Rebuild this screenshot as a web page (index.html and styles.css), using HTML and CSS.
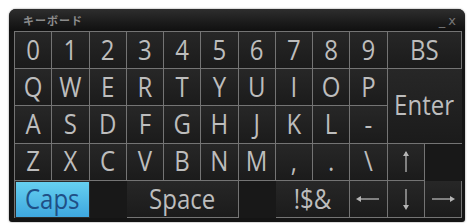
FILE: index.html
```html
<!DOCTYPE html>
<html lang="ja">
  <head>
    <meta charset="UTF-8" />
    <meta name="viewport" content="width=device-width, initial-scale=1.0" />
    <title>キーボード</title>
    <link rel="stylesheet" href="styles.css">
  </head>
  <body>
    <div class="panel">
      <div class="titlebar">
        <span class="title">キーボード</span>
        <span class="winbtns">_<span class="close">x</span></span>
      </div>
      <div class="keys">
        <div class="key"><span>0</span></div>
        <div class="key"><span>1</span></div>
        <div class="key"><span>2</span></div>
        <div class="key"><span>3</span></div>
        <div class="key"><span>4</span></div>
        <div class="key"><span>5</span></div>
        <div class="key"><span>6</span></div>
        <div class="key"><span>7</span></div>
        <div class="key"><span>8</span></div>
        <div class="key"><span>9</span></div>
        <div class="key wide"><span>BS</span></div>

        <div class="key"><span>Q</span></div>
        <div class="key"><span>W</span></div>
        <div class="key"><span>E</span></div>
        <div class="key"><span>R</span></div>
        <div class="key"><span>T</span></div>
        <div class="key"><span>Y</span></div>
        <div class="key"><span>U</span></div>
        <div class="key"><span>I</span></div>
        <div class="key"><span>O</span></div>
        <div class="key"><span>P</span></div>
        <div class="key enter"><span>Enter</span></div>

        <div class="key"><span>A</span></div>
        <div class="key"><span>S</span></div>
        <div class="key"><span>D</span></div>
        <div class="key"><span>F</span></div>
        <div class="key"><span>G</span></div>
        <div class="key"><span>H</span></div>
        <div class="key"><span>J</span></div>
        <div class="key"><span>K</span></div>
        <div class="key"><span>L</span></div>
        <div class="key"><span>-</span></div>

        <div class="key"><span>Z</span></div>
        <div class="key"><span>X</span></div>
        <div class="key"><span>C</span></div>
        <div class="key"><span>V</span></div>
        <div class="key"><span>B</span></div>
        <div class="key"><span>N</span></div>
        <div class="key"><span>M</span></div>
        <div class="key"><span>,</span></div>
        <div class="key"><span>.</span></div>
        <div class="key"><span>\</span></div>
        <div class="key">
          <svg width="8" height="24" viewBox="0 0 8 24"><path d="M4 2 V22" stroke="#b5b5b5" stroke-width="1.3"/><path d="M1 6 L4 1 L7 6 Z" fill="#b5b5b5"/></svg>
        </div>
        <div class="blank"></div>

        <div class="key caps wide"><span>Caps</span></div>
        <div class="blank"></div>
        <div class="key space"><span>Space</span></div>
        <div class="blank"></div>
        <div class="key wide"><span>!$&amp;</span></div>
        <div class="key">
          <svg width="26" height="8" viewBox="0 0 26 8"><path d="M4 4 H24" stroke="#b5b5b5" stroke-width="1.3"/><path d="M6 1 L1 4 L6 7 Z" fill="#b5b5b5"/></svg>
        </div>
        <div class="key">
          <svg width="8" height="24" viewBox="0 0 8 24"><path d="M4 2 V20" stroke="#b5b5b5" stroke-width="1.3"/><path d="M1 18 L4 23 L7 18 Z" fill="#b5b5b5"/></svg>
        </div>
        <div class="key">
          <svg width="26" height="8" viewBox="0 0 26 8"><path d="M2 4 H22" stroke="#b5b5b5" stroke-width="1.3"/><path d="M20 1 L25 4 L20 7 Z" fill="#b5b5b5"/></svg>
        </div>
      </div>
    </div>
  </body>
</html>
```

FILE: styles.css
```css
body {
  margin: 0;
  background: #fff;
  font-family: "Open Sans", "Noto Sans", sans-serif;
}
.panel {
  margin: 9px 6px 1px 9px;
  height: 213px;
  box-sizing: border-box;
  padding: 0 3px 4px 5px;
  background: #141414;
  border-radius: 7px 7px 3px 3px;
  box-shadow: 0 0 2px rgba(0, 0, 0, 0.5);
  display: flex;
  flex-direction: column;
}
.titlebar {
  height: 22px;
  flex: none;
  display: flex;
  align-items: center;
  justify-content: space-between;
  margin: 0 -3px 0 -5px;
  padding: 0 9px 0 14px;
  background: linear-gradient(#2e2e2e, #1b1b1b 60%, #101010);
  border-radius: 7px 7px 0 0;
}
.title {
  font-family: "Noto Sans CJK JP", sans-serif;
  font-size: 11px;
  font-weight: bold;
  color: #8c8c8c;
  letter-spacing: 1px;
}
.winbtns {
  font-family: "DejaVu Sans", sans-serif;
  font-size: 13px;
  color: #777;
  line-height: 1;
}
.close {
  margin-left: 3px;
}
.keys {
  flex: 1;
  display: grid;
  grid-template-columns: repeat(12, 1fr);
  grid-template-rows: repeat(5, 1fr);
  border-top: 1px solid #747474;
  border-left: 1px solid #747474;
}
.key {
  display: flex;
  align-items: center;
  justify-content: center;
  border-right: 1px solid #747474;
  border-bottom: 1px solid #747474;
  background: linear-gradient(#272727, #1b1b1b);
  color: #bdbdbd;
  font-size: 24px;
  line-height: 1.2;
}
.key span {
  display: inline-block;
  transform: scaleY(1.15);
}
.blank {
  background: #181818;
}
.wide {
  grid-column: span 2;
}
.space {
  grid-column: span 3;
}
.enter {
  grid-column: span 2;
  grid-row: span 2;
  justify-content: flex-end;
  padding-right: 8px;
  border-right: none;
}
.caps {
  background: linear-gradient(#66d0f0, #3ea7df);
  color: #1f4f86;
  border: 1px solid #2a2a2a;
}
```
